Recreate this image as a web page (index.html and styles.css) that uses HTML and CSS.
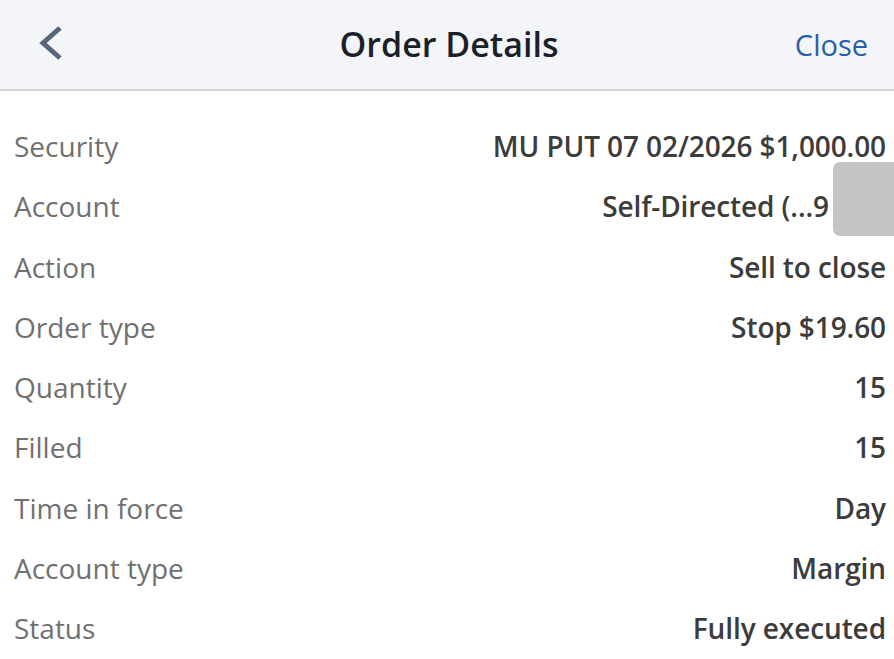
FILE: index.html
```html
<!DOCTYPE html>
<html lang="en">
<head>
<meta charset="utf-8">
<title>Order Details</title>
<link rel="stylesheet" href="styles.css">
</head>
<body>
<header class="topbar">
  <button class="back" aria-label="Back">
    <svg width="40" height="50" viewBox="0 0 40 50"><polyline points="30,8 13,23 30,38" fill="none" stroke="#56677a" stroke-width="5" stroke-linecap="butt" stroke-linejoin="miter"/></svg>
  </button>
  <h1 class="title">Order Details</h1>
  <a class="close">Close</a>
</header>
<main class="details">
  <div class="row"><span class="label">Security</span><span class="value">MU PUT 07 02/2026 $1,000.00</span></div>
  <div class="row account"><span class="label">Account</span><span class="value">Self-Directed (...9</span><span class="redact"></span></div>
  <div class="row"><span class="label">Action</span><span class="value">Sell to close</span></div>
  <div class="row"><span class="label">Order type</span><span class="value">Stop $19.60</span></div>
  <div class="row"><span class="label">Quantity</span><span class="value">15</span></div>
  <div class="row"><span class="label">Filled</span><span class="value">15</span></div>
  <div class="row"><span class="label">Time in force</span><span class="value">Day</span></div>
  <div class="row"><span class="label">Account type</span><span class="value">Margin</span></div>
  <div class="row"><span class="label">Status</span><span class="value">Fully executed</span></div>
</main>
</body>
</html>
```
FILE: styles.css
```css
* { box-sizing: border-box; }
html, body { margin: 0; padding: 0; background: #ffffff; }
body { font-family: "Open Sans", "Noto Sans", sans-serif; width: 894px; height: 659px; overflow: hidden; }
.topbar {
  height: 91px;
  background: #f4f5f8;
  border-bottom: 2px solid #d4d5d8;
  display: grid;
  grid-template-columns: 1fr auto 1fr;
  align-items: center;
  padding: 0 26px 0 30px;
}
.back { justify-self: start; background: none; border: 0; padding: 0; display: flex; margin-top: 0; }
.title { margin: 0; font-size: 34px; font-weight: 600; color: #1b1f2a; margin-top: -2px; }
.close { justify-self: end; font-size: 29px; font-weight: 500; color: #2b5ea7; margin-top: 0; }
.details { padding-top: 25px; }
.row {
  height: 60.25px;
  display: flex;
  justify-content: space-between;
  align-items: center;
  padding: 0 8px 0 14px;
  position: relative;
}
.label { font-size: 28px; color: #707070; }
.value { font-size: 28px; font-weight: 600; color: #3c3c3c; letter-spacing: -0.1px; }
.account { padding-right: 65px; }
.redact {
  position: absolute;
  right: 0;
  top: -14px;
  width: 61px;
  height: 74px;
  background: #c4c4c4;
  border-radius: 7px 0 0 7px;
}
```
